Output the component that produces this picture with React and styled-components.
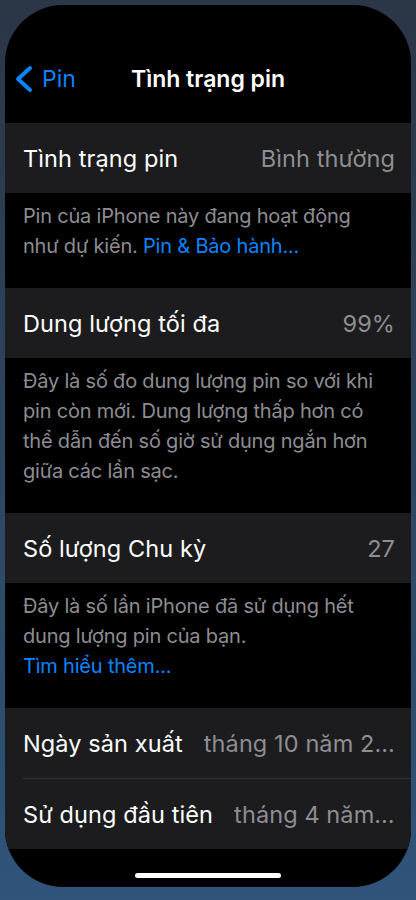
import styled, { createGlobalStyle } from "styled-components";

const GlobalStyle = createGlobalStyle`
    * {
        box-sizing: border-box;
    }

    body {
        margin: 0;
        font-family: Inter, "Noto Sans", sans-serif;
        -webkit-font-smoothing: antialiased;
    }
`;

export default function App() {
    return (
        <>
            <GlobalStyle />
            <Page>
                <Screen>
                    <Nav>
                        <Back>
                            <svg width="18" height="28" viewBox="0 0 18 28">
                                <path d="M15 3 L3 14 L15 25" fill="none" stroke="#0a84ff" strokeWidth="4" strokeLinecap="round" strokeLinejoin="round" />
                            </svg>
                            <span>Pin</span>
                        </Back>
                        <Title>Tình trạng pin</Title>
                    </Nav>

                    <Cell>
                        <Label>Tình trạng pin</Label>
                        <Value>Bình thường</Value>
                    </Cell>
                    <Footnote>
                        Pin của iPhone này đang hoạt động như dự kiến. <Link>Pin &amp; Bảo hành...</Link>
                    </Footnote>

                    <Cell>
                        <Label>Dung lượng tối đa</Label>
                        <Value>99%</Value>
                    </Cell>
                    <Footnote>
                        Đây là số đo dung lượng pin so với khi pin còn mới. Dung lượng thấp hơn có thể dẫn đến số giờ sử dụng ngắn hơn giữa các lần sạc.
                    </Footnote>

                    <Cell>
                        <Label>Số lượng Chu kỳ</Label>
                        <Value>27</Value>
                    </Cell>
                    <Footnote>
                        Đây là số lần iPhone đã sử dụng hết dung lượng pin của bạn.
                        <br />
                        <Link>Tìm hiểu thêm...</Link>
                    </Footnote>

                    <Group>
                        <Cell>
                            <Label>Ngày sản xuất</Label>
                            <Value>tháng 10 năm 2022</Value>
                        </Cell>
                        <Separator />
                        <Cell>
                            <Label>Sử dụng đầu tiên</Label>
                            <Value>tháng 4 năm 2023</Value>
                        </Cell>
                    </Group>

                    <HomeIndicator />
                </Screen>
            </Page>
        </>
    );
}

const Page = styled.div`
    width: 416px;
    height: 900px;
    padding: 5px 5px 13px 5px;
    background: linear-gradient(180deg, #2b3646 0%, #2d4660 50%, #30547a 100%);
`;

const Screen = styled.div`
    height: 100%;
    background-color: #000;
    border-radius: 58px;
    overflow: hidden;
    display: flex;
    flex-direction: column;
    position: relative;
`;

const Nav = styled.div`
    height: 118px;
    flex-shrink: 0;
    padding-top: 51px;
    padding-left: 10px;
    display: flex;
    align-items: flex-start;
    position: relative;
`;

const Back = styled.div`
    height: 46px;
    display: flex;
    align-items: center;
    gap: 9px;
    color: #0a84ff;
    font-size: 23px;
`;

const Title = styled.div`
    position: absolute;
    left: 0;
    right: 0;
    top: 51px;
    height: 46px;
    line-height: 46px;
    text-align: center;
    color: #fff;
    font-size: 23px;
    font-weight: 600;
    pointer-events: none;
`;

const Cell = styled.div`
    height: 70px;
    flex-shrink: 0;
    background-color: #1c1c1e;
    display: flex;
    align-items: center;
    gap: 21px;
    padding: 0 16px 0 18px;
    font-size: 23.5px;
    letter-spacing: 0.1px;
`;

const Label = styled.div`
    color: #fff;
    white-space: nowrap;
    flex-shrink: 0;
`;

const Value = styled.div`
    flex: 1;
    min-width: 0;
    text-align: right;
    color: #8e8e93;
    white-space: nowrap;
    overflow: hidden;
    text-overflow: ellipsis;
`;

const Footnote = styled.div`
    padding: 9px 20px 27px 18px;
    color: #8d8d92;
    font-size: 20px;
    line-height: 29.7px;
    letter-spacing: -0.2px;
`;

const Link = styled.span`
    color: #0a84ff;
`;

const Group = styled.div`
    background-color: #1c1c1e;
    display: flex;
    flex-direction: column;
`;

const Separator = styled.div`
    height: 1px;
    margin-left: 18px;
    background-color: #333336;
`;

const HomeIndicator = styled.div`
    position: absolute;
    left: 50%;
    bottom: 9px;
    width: 146px;
    height: 5px;
    margin-left: -73px;
    border-radius: 3px;
    background-color: #fff;
`;
